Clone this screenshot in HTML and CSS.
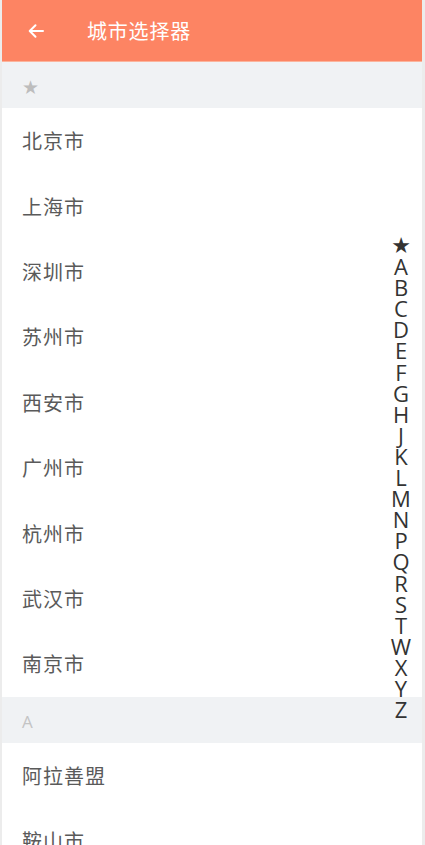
FILE: index.html
```html
<!DOCTYPE html>
<html lang="zh">
<head>
<meta charset="utf-8">
<link rel="stylesheet" href="styles.css">
</head>
<body>
<div class="page">
  <header class="topbar">
    <svg class="back" width="18" height="18" viewBox="0 0 18 18"><path d="M16 9H3M8.5 3.2L2.7 9l5.8 5.8" fill="none" stroke="#fff" stroke-width="2" stroke-linecap="round" stroke-linejoin="round"/></svg>
    <span class="title">城市选择器</span>
  </header>
  <div class="section-head star">★</div>
  <ul class="list">
    <li>北京市</li>
    <li>上海市</li>
    <li>深圳市</li>
    <li>苏州市</li>
    <li>西安市</li>
    <li>广州市</li>
    <li>杭州市</li>
    <li>武汉市</li>
    <li>南京市</li>
  </ul>
  <div class="section-head">A</div>
  <ul class="list">
    <li>阿拉善盟</li>
    <li>鞍山市</li>
    <li>安庆市</li>
  </ul>
  <nav class="index">
    <span>★</span><span>A</span><span>B</span><span>C</span><span>D</span><span>E</span><span>F</span><span>G</span><span>H</span><span>J</span><span>K</span><span>L</span><span>M</span><span>N</span><span>P</span><span>Q</span><span>R</span><span>S</span><span>T</span><span>W</span><span>X</span><span>Y</span><span>Z</span>
  </nav>
</div>
</body>
</html>
```

FILE: styles.css
```css
html, body {
  margin: 0;
  padding: 0;
  background: #ececec;
  overflow: hidden;
  height: 845px;
}
body {
  font-family: "Noto Sans CJK SC", "Noto Sans", sans-serif;
}
.page {
  margin: 0 3px 0 2px;
  background: #fff;
  height: 845px;
  position: relative;
  overflow: hidden;
}
.topbar {
  height: 62px;
  background: #fd8463;
  display: flex;
  align-items: center;
  color: #fff;
  border-bottom: 1px solid #fbb49c;
  box-sizing: border-box;
}
.back {
  margin-left: 25px;
}
.title {
  margin-left: 42px;
  font-size: 20px;
  letter-spacing: 0.8px;
}
.section-head {
  height: 46px;
  box-sizing: border-box;
  padding-top: 3px;
  background: #f0f2f4;
  color: #c4c4c4;
  font-family: "Open Sans", "Noto Sans", sans-serif;
  font-size: 17px;
  display: flex;
  align-items: center;
  padding-left: 20px;
}
.section-head.star {
  color: #bdbdbd;
  font-family: "DejaVu Sans", sans-serif;
  font-size: 19px;
}
.list {
  list-style: none;
  margin: 0;
  padding: 0;
}
.list li {
  height: 65.4px;
  display: flex;
  align-items: center;
  padding-left: 20px;
  font-size: 20px;
  color: #5a5a5a;
  letter-spacing: 1px;
}
.index {
  position: absolute;
  top: 235px;
  right: 8px;
  width: 26px;
  display: flex;
  flex-direction: column;
  align-items: center;
  font-family: "Open Sans", sans-serif;
  font-size: 22px;
  line-height: 21.1px;
  color: #333;
}
.index span:first-child {
  font-family: "DejaVu Sans", sans-serif;
  font-size: 22px;
}
```
